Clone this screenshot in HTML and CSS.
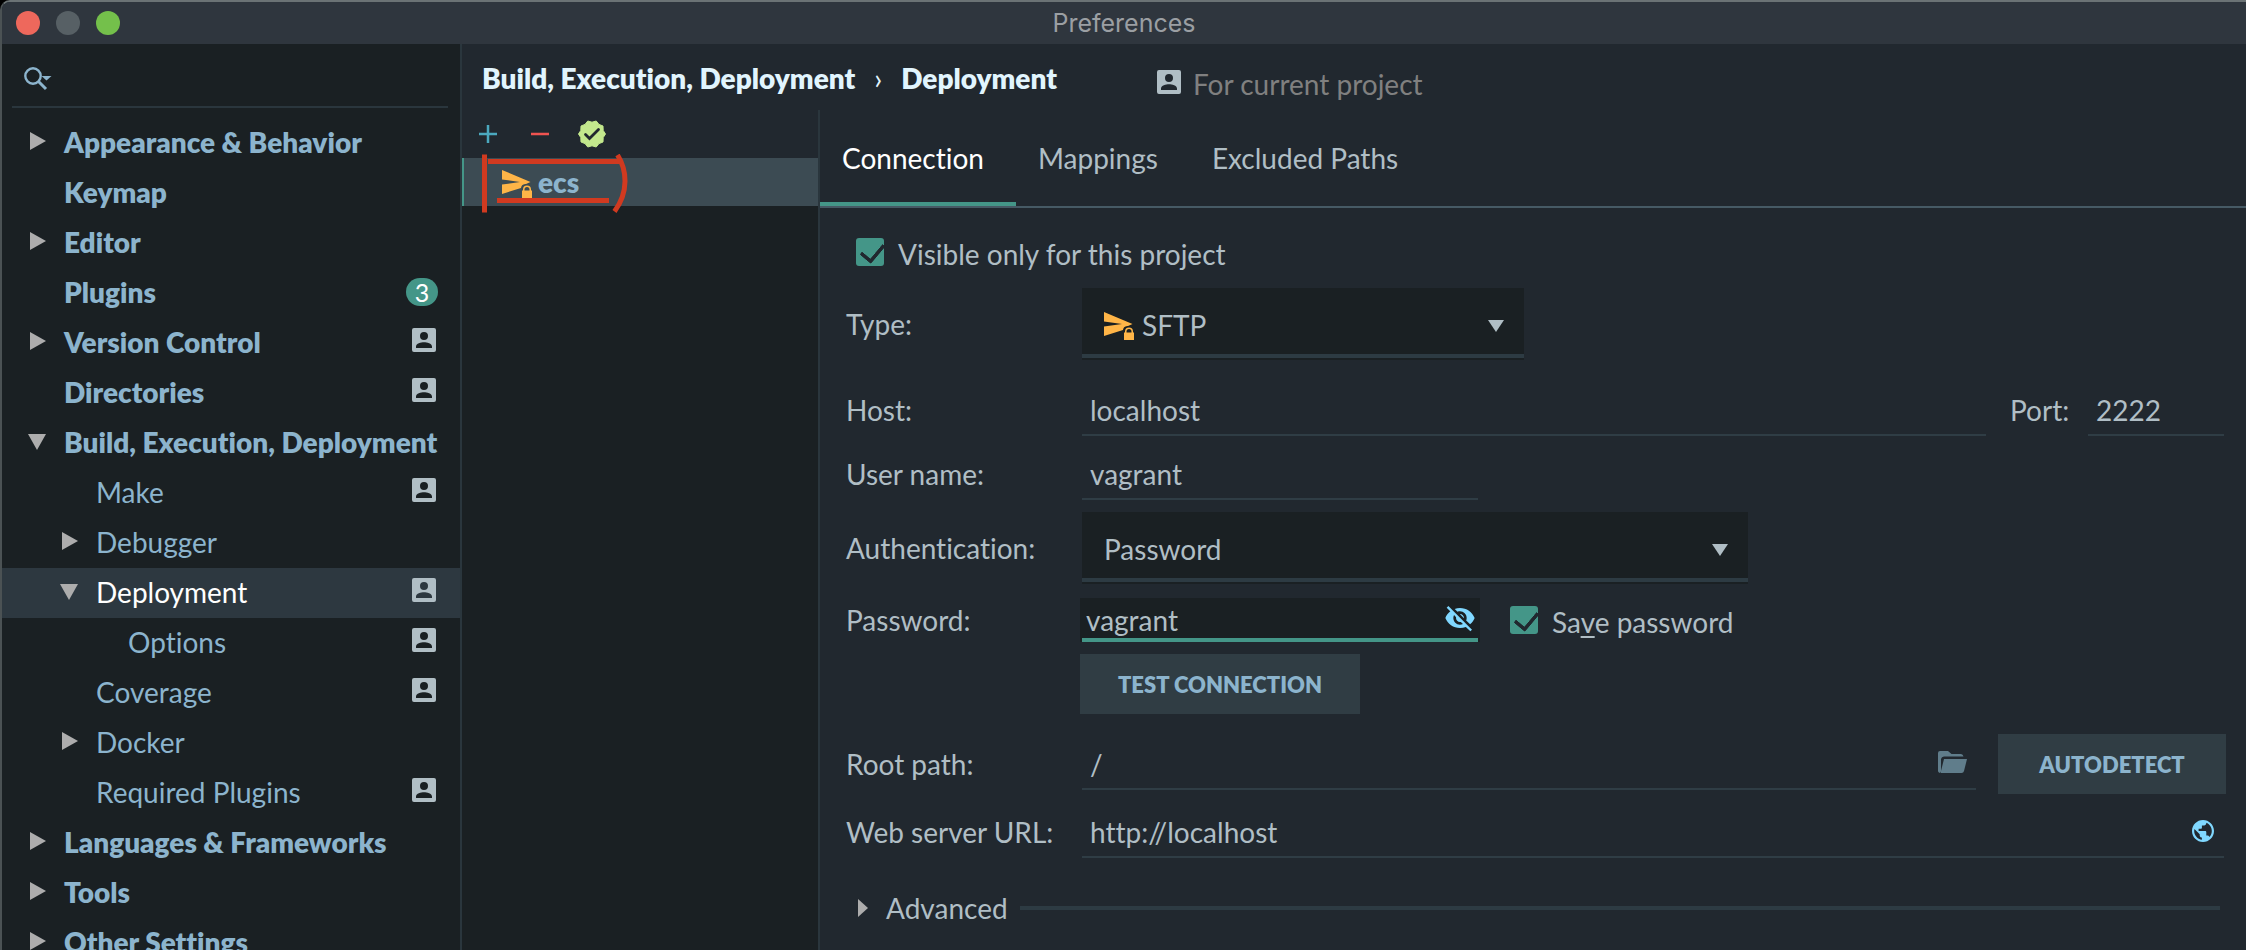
FILE: index.html
```html
<!DOCTYPE html>
<html lang="en">
<head>
<meta charset="utf-8">
<title>Preferences</title>
<link rel="stylesheet" href="styles.css">
</head>
<body>
<svg class="sprite" aria-hidden="true">
  <symbol id="project" viewBox="0 0 24 24"><path fill="currentColor" fill-rule="evenodd" d="M2 0h20a2 2 0 0 1 2 2v20a2 2 0 0 1-2 2H2a2 2 0 0 1-2-2V2a2 2 0 0 1 2-2zM12 4a4 4 0 1 0 0 8a4 4 0 1 0 0-8zM4 20h16v-1.500c0-3-5-4.300-8-4.300s-8 1.300-8 4.300z"/></symbol>
  <symbol id="closed" viewBox="0 0 18 18"><path fill="currentColor" d="M2 0L18 9L2 18z"/></symbol>
  <symbol id="open" viewBox="0 0 18 18"><path fill="currentColor" d="M0 2H18L9 18z"/></symbol>
  <symbol id="sftp" viewBox="0 0 30 28"><path fill="currentColor" d="M0 0L28.500 12L24 14C21 13.500 19 16 19 18L0 24V14.500L18 12L0 9.500z"/><path fill="currentColor" fill-rule="evenodd" d="M20 20.500H21V19.500a4 4 0 0 1 8 0V20.500H30V28H20zM22.500 20.500H27.500V19.500a2.500 2.500 0 0 0-5 0z"/></symbol>
  <symbol id="down" viewBox="0 0 16 12"><path fill="currentColor" d="M0 0H16L8 12z"/></symbol>
</svg>

<div class="window">
  <header class="titlebar">
    <div class="lights">
      <button class="light light-close" aria-label="Close"></button>
      <button class="light light-min" aria-label="Minimize"></button>
      <button class="light light-zoom" aria-label="Zoom"></button>
    </div>
    <h1 class="title">Preferences</h1>
  </header>

  <div class="body">
    <aside class="sidebar">
      <div class="search">
        <svg class="search-icon" viewBox="0 0 28 24" aria-hidden="true"><circle cx="9" cy="9" r="7.700" fill="none" stroke="currentColor" stroke-width="2.400"/><path d="M14.500 14.500L22 22" fill="none" stroke="currentColor" stroke-width="3"/><path d="M17.500 9H27.500L22.500 13.500z" fill="currentColor"/></svg>
        <input class="search-input" type="text" aria-label="Search settings">
      </div>
      <nav class="tree" aria-label="Settings">
        <a class="node top" href="#"><svg class="arrow"><use href="#closed"/></svg><span class="name">Appearance &amp; Behavior</span></a>
        <a class="node top" href="#"><span class="arrow"></span><span class="name">Keymap</span></a>
        <a class="node top" href="#"><svg class="arrow"><use href="#closed"/></svg><span class="name">Editor</span></a>
        <a class="node top" href="#"><span class="arrow"></span><span class="name">Plugins</span><span class="count">3</span></a>
        <a class="node top" href="#"><svg class="arrow"><use href="#closed"/></svg><span class="name">Version Control</span><svg class="scope"><use href="#project"/></svg></a>
        <a class="node top" href="#"><span class="arrow"></span><span class="name">Directories</span><svg class="scope"><use href="#project"/></svg></a>
        <a class="node top" href="#"><svg class="arrow"><use href="#open"/></svg><span class="name">Build, Execution, Deployment</span></a>
        <a class="node child" href="#"><span class="arrow"></span><span class="name">Make</span><svg class="scope"><use href="#project"/></svg></a>
        <a class="node child" href="#"><svg class="arrow"><use href="#closed"/></svg><span class="name">Debugger</span></a>
        <a class="node child selected" href="#" aria-current="page"><svg class="arrow"><use href="#open"/></svg><span class="name">Deployment</span><svg class="scope"><use href="#project"/></svg></a>
        <a class="node grandchild" href="#"><span class="arrow"></span><span class="name">Options</span><svg class="scope"><use href="#project"/></svg></a>
        <a class="node child" href="#"><span class="arrow"></span><span class="name">Coverage</span><svg class="scope"><use href="#project"/></svg></a>
        <a class="node child" href="#"><svg class="arrow"><use href="#closed"/></svg><span class="name">Docker</span></a>
        <a class="node child" href="#"><span class="arrow"></span><span class="name">Required Plugins</span><svg class="scope"><use href="#project"/></svg></a>
        <a class="node top" href="#"><svg class="arrow"><use href="#closed"/></svg><span class="name">Languages &amp; Frameworks</span></a>
        <a class="node top" href="#"><svg class="arrow"><use href="#closed"/></svg><span class="name">Tools</span></a>
        <a class="node top" href="#"><svg class="arrow"><use href="#closed"/></svg><span class="name">Other Settings</span></a>
      </nav>
    </aside>

    <main class="main">
      <div class="crumbs">
        <span class="crumb">Build, Execution, Deployment</span>
        <span class="crumb-sep">›</span>
        <span class="crumb">Deployment</span>
        <span class="for-project"><svg class="for-icon"><use href="#project"/></svg><span>For current project</span></span>
      </div>

      <div class="columns">
        <section class="servers" aria-label="Servers">
          <div class="toolbar">
            <button class="tool" aria-label="Add"><svg viewBox="0 0 28 28"><path d="M5 14H23M14 5V23" stroke="#4ba9bf" stroke-width="2.500"/></svg></button>
            <button class="tool" aria-label="Remove"><svg viewBox="0 0 28 28"><path d="M5 14H23" stroke="#ef5350" stroke-width="2.500"/></svg></button>
            <button class="tool tool-default" aria-label="Use as default"><svg viewBox="-14 -14 28 28"><path fill="#c3e88d" stroke="#c3e88d" stroke-linejoin="round" d="M13.500 0L11.200 3.600L11 8L7 9.600L4.200 13L0 11.800L-4.200 13L-7 9.600L-11 8L-11.200 3.600L-13.500 0L-11.200-3.600L-11-8L-7-9.600L-4.200-13L0-11.800L4.200-13L7-9.600L11-8L11.200-3.600z"/><path d="M-6.500 .5L-2.500 4.500L6.500-4.500" fill="none" stroke="#21282f" stroke-width="2.800" stroke-linecap="round"/></svg></button>
          </div>
          <div class="server">
            <svg class="sftp-icon"><use href="#sftp"/></svg>
            <span class="server-name">ecs</span>
            <svg class="mark" viewBox="0 0 150 60" aria-hidden="true"><path d="M4.500 0.500V58.500M8 7.500H142M17 46.500H129M137.500 1C147 16 149 38 134.500 57.500" fill="none" stroke="#d13a20" stroke-width="5"/></svg>
          </div>
        </section>

        <section class="detail">
          <div class="tabs" role="tablist">
            <button class="tab active" role="tab" aria-selected="true">Connection</button>
            <button class="tab" role="tab" aria-selected="false">Mappings</button>
            <button class="tab" role="tab" aria-selected="false">Excluded Paths</button>
          </div>

          <form class="form">
            <label class="check check-visible"><input type="checkbox" checked><span>Visible only for this project</span></label>

            <div class="row row-type">
              <label class="label" for="type">Type:</label>
              <div class="combo combo-type">
                <svg class="sftp-icon"><use href="#sftp"/></svg>
                <select id="type"><option>SFTP</option></select>
                <svg class="combo-arrow"><use href="#down"/></svg>
              </div>
            </div>

            <div class="row row-host">
              <label class="label" for="host">Host:</label>
              <input class="field grow" id="host" type="text" value="localhost">
              <label class="port-label" for="port">Port:</label>
              <input class="field port" id="port" type="text" value="2222">
            </div>

            <div class="row row-user">
              <label class="label" for="user">User name:</label>
              <input class="field user" id="user" type="text" value="vagrant">
            </div>

            <div class="row row-auth">
              <label class="label" for="auth">Authentication:</label>
              <div class="combo combo-auth">
                <select id="auth"><option>Password</option></select>
                <svg class="combo-arrow"><use href="#down"/></svg>
              </div>
            </div>

            <div class="row row-pass">
              <label class="label" for="pass">Password:</label>
              <div class="secret">
                <input class="secret-input" id="pass" type="text" value="vagrant">
                <button class="eye" type="button" aria-label="Hide password"><svg viewBox="0 0 24 24"><path fill="currentColor" d="M12 7c2.760 0 5 2.240 5 5 0 .65-.13 1.260-.36 1.830l2.920 2.920c1.510-1.260 2.700-2.890 3.430-4.750-1.730-4.390-6-7.500-11-7.500-1.400 0-2.740.25-3.980.7l2.160 2.160C10.740 7.130 11.350 7 12 7zM2 4.270l2.280 2.280.46.46C3.080 8.300 1.780 10.020 1 12c1.730 4.390 6 7.500 11 7.500 1.550 0 3.030-.3 4.380-.84l.42.42L19.730 22 21 20.730 3.270 3 2 4.270zM7.530 9.800l1.550 1.550c-.05.21-.08.43-.08.65 0 1.660 1.340 3 3 3 .22 0 .44-.03.65-.08l1.550 1.550c-.67.33-1.410.53-2.200.53-2.760 0-5-2.240-5-5 0-.79.2-1.530.53-2.200zm4.310-.78l3.150 3.150.02-.16c0-1.660-1.340-3-3-3l-.17.01z"/></svg></button>
              </div>
              <label class="check check-save"><input type="checkbox" checked><span>Sa<u>v</u>e password</span></label>
            </div>

            <div class="row row-test">
              <button class="btn btn-test" type="button">TEST CONNECTION</button>
            </div>

            <div class="row row-root">
              <label class="label" for="root">Root path:</label>
              <div class="with-icon grow">
                <input class="field" id="root" type="text" value="/">
                <button class="folder" type="button" aria-label="Browse"><svg viewBox="0 0 29 22"><path fill="currentColor" d="M2 0H10L13.500 3H23Q25 3 25.500 5.500H6Q3.500 5.500 3 8V20.500L1.500 22Q0 21 0 20V2Q0 0 2 0z"/><path fill="currentColor" d="M6 8H29L26 20Q25.500 22 23.500 22H2.500z"/></svg></button>
              </div>
              <button class="btn btn-auto" type="button">AUTODETECT</button>
            </div>

            <div class="row row-web">
              <label class="label" for="web">Web server URL:</label>
              <div class="with-icon grow">
                <input class="field" id="web" type="text" value="http://localhost">
                <button class="globe" type="button" aria-label="Open in browser"><svg viewBox="2 2 20 20"><path fill="currentColor" d="M12 2C6.480 2 2 6.480 2 12s4.480 10 10 10 10-4.480 10-10S17.520 2 12 2zm-1 17.930c-3.950-.49-7-3.850-7-7.930 0-.62.08-1.210.21-1.790L9 15v1c0 1.100.9 2 2 2v1.930zm6.900-2.540c-.26-.81-1-1.390-1.900-1.390h-1v-3c0-.55-.45-1-1-1H8v-2h2c.55 0 1-.45 1-1V7h2c1.100 0 2-.9 2-2v-.41c2.930 1.190 5 4.060 5 7.410 0 2.080-.8 3.970-2.100 5.390z"/></svg></button>
              </div>
            </div>

            <button class="advanced" type="button" aria-expanded="false">
              <svg class="adv-arrow" viewBox="0 0 10 18"><path fill="currentColor" d="M0 0L10 9L0 18z"/></svg>
              <span>Advanced</span>
              <span class="rule"></span>
            </button>
          </form>
        </section>
      </div>
    </main>
  </div>
</div>
</body>
</html>
```
FILE: styles.css
```css
* { box-sizing: border-box; }

body {
  margin: 0;
  background: #000;
  color: #b0bec5;
  font-family: Lato, "Open Sans", sans-serif;
  font-size: 28px;
  line-height: 32px;
  font-variant-ligatures: none;
}

button, input, select {
  margin: 0;
  padding: 0;
  border: 0;
  border-radius: 0;
  background: none;
  color: inherit;
  font: inherit;
  font-variant-ligatures: none;
  outline: 0;
}

svg { display: block; flex: none; }
.sprite { position: absolute; width: 0; height: 0; }

.window {
  display: flex;
  flex-direction: column;
  height: 100vh;
  border-top: 2px solid #6b7375;
  border-left: 2px solid #4b5254;
  border-radius: 10px 0 0 0;
  background: #21282f;
  overflow: hidden;
}

/* Title bar */
.titlebar {
  display: grid;
  grid-template-columns: 1fr auto 1fr;
  align-items: center;
  height: 42px;
  flex: none;
  background: #2f363e;
}
.lights { display: flex; gap: 16px; padding-left: 14px; }
.light { width: 24px; height: 24px; border-radius: 50%; }
.light-close { background: #ee685c; }
.light-min { background: #576065; }
.light-zoom { background: #74c04b; }
.title {
  margin: 0;
  font-family: Inter, sans-serif;
  font-size: 25px;
  font-weight: 400;
  line-height: 32px;
  color: #9b9fa3;
}

.body { display: flex; flex: 1; min-height: 0; }

/* Sidebar */
.sidebar {
  width: 460px;
  flex: none;
  border-right: 2px solid #2a363d;
  background: #1a2023;
  overflow: hidden;
}
.search {
  display: flex;
  align-items: center;
  height: 64px;
  margin: 0 12px 10px 10px;
  padding: 8px 0 0 12px;
  border-bottom: 2px solid #2a363d;
  color: #8cb4cd;
}
.search-icon { width: 28px; height: 24px; }
.search-input { flex: 1; min-width: 0; padding-left: 8px; }

.node {
  display: flex;
  align-items: flex-start;
  height: 50px;
  padding-right: 24px;
  color: #8cb4cd;
  text-decoration: none;
}
.top { padding-left: 26px; font-weight: 800; }
.child { padding-left: 58px; }
.grandchild { padding-left: 90px; }
.arrow { width: 18px; height: 18px; margin-top: 14px; color: #adadad; flex: none; }
.name { flex: 1; min-width: 0; margin-top: 8px; padding-left: 18px; white-space: nowrap; }
.scope { width: 24px; height: 24px; margin-top: 10px; color: #b0bec5; }
.count {
  width: 32px;
  height: 28px;
  margin: 10px -2px 0 0;
  border-radius: 14px;
  background: #449688;
  color: #fff;
  font-size: 25px;
  font-weight: 400;
  line-height: 28px;
  text-align: center;
}
.selected { background: #2d3840; color: #fff; }

/* Main */
.main { display: flex; flex-direction: column; flex: 1; min-width: 0; }
.crumbs {
  display: flex;
  height: 66px;
  flex: none;
  padding: 18px 0 0 20px;
  color: #e1f5fe;
}
.crumb { font-weight: 800; }
.crumb-sep { padding: 0 19px; }
.for-project { display: flex; margin: 6px 0 0 100px; color: #808080; }
.for-icon { width: 24px; height: 24px; margin: 2px 12px 0 0; color: #b0bec5; }

.columns { display: flex; flex: 1; min-height: 0; }
.servers {
  width: 358px;
  flex: none;
  border-right: 2px solid #2a363d;
  background: #1a2023;
}
.toolbar {
  display: flex;
  gap: 24px;
  height: 48px;
  padding: 10px 0 0 12px;
  background: #21282f;
}
.tool, .tool svg { width: 28px; height: 28px; }
.server {
  position: relative;
  display: flex;
  align-items: flex-start;
  height: 48px;
  padding: 8px 0 0 38px;
  border-left: 2px solid #449688;
  background: #3c4b53;
  color: #8cb4cd;
  font-weight: 800;
}
.sftp-icon { width: 30px; height: 28px; color: #ffb547; }
.server .sftp-icon { margin-top: 4px; }
.server-name { padding-left: 6px; }
.mark { position: absolute; left: 16px; top: -4px; width: 150px; height: 60px; }

.detail { flex: 1; min-width: 0; }
.tabs { display: flex; height: 98px; border-bottom: 2px solid #465a65; }
.tab { padding: 4px 32px 0 22px; border-bottom: 4px solid transparent; }
.active { border-bottom-color: #449688; color: #fff; }

/* Form */
.form { padding: 30px 20px 0 26px; }
.check { display: flex; align-items: flex-start; height: 32px; }
.check input {
  appearance: none;
  position: relative;
  width: 28px;
  height: 28px;
  flex: none;
  border-radius: 3px;
  background: #449688;
}
.check input:checked::after {
  content: "";
  position: absolute;
  left: 5px;
  top: 5px;
  width: 19px;
  height: 11px;
  border-left: 4px solid #21282f;
  border-bottom: 4px solid #21282f;
  border-radius: 2px;
  transform: rotate(-50deg);
}
.check-visible { padding-left: 10px; }
.check-visible span { padding-left: 14px; }
.check-save { margin: 8px 0 0 30px; }
.check-save span { padding-left: 14px; }
.check-save u { text-underline-offset: 3px; text-decoration-thickness: 2px; text-decoration-skip-ink: none; }

.row { display: flex; align-items: flex-start; }
.label { width: 236px; flex: none; white-space: nowrap; }
.grow { flex: 1; min-width: 0; }

.field {
  height: 42px;
  padding: 0 8px 8px;
  border-bottom: 2px solid #2f3d45;
}
.user { width: 396px; }
.port { width: 136px; }
.port-label { width: 78px; margin-left: 24px; }

.combo { position: relative; height: 72px; padding-bottom: 2px; background: #1a2023; }
.combo select {
  appearance: none;
  display: block;
  width: 100%;
  height: 70px;
  padding: 8px 60px 0 22px;
  border-bottom: 4px solid #2d3b43;
}
.combo .sftp-icon { position: absolute; left: 22px; top: 24px; pointer-events: none; }
.combo-arrow { position: absolute; right: 20px; top: 32px; width: 16px; height: 12px; pointer-events: none; }
.combo-type { width: 442px; }
.combo-type select { padding-left: 60px; }
.combo-auth { width: 666px; }

.row-type { margin-top: 18px; }
.row-type, .row-auth { align-items: center; }
.row-host { margin-top: 34px; padding-right: 2px; }
.row-user { margin-top: 22px; }
.row-auth { margin-top: 12px; }
.row-pass { margin-top: 14px; }
.row-pass .label { padding-top: 6px; width: 234px; }
.row-test { margin-top: 12px; padding-left: 234px; }
.row-root { margin-top: 20px; align-items: center; }
.row-web { margin-top: 22px; padding-right: 2px; }

.secret {
  display: flex;
  width: 400px;
  height: 44px;
  padding-bottom: 4px;
  background: linear-gradient(#449688, #449688) center bottom / calc(100% - 4px) 4px no-repeat, #1a2023;
}
.secret-input { flex: 1; min-width: 0; padding: 6px 0 2px 6px; }
.eye { width: 32px; height: 32px; margin: 4px 4px 0 0; color: #80d8ff; }

.btn {
  height: 60px;
  padding-top: 2px;
  background: #303d44;
  color: #8cb4cd;
  font-weight: 800;
  font-size: 22px;
}
.btn-test { width: 280px; }
.btn-auto { width: 228px; margin-left: 22px; }

.with-icon { position: relative; }
.with-icon .field { display: block; width: 100%; padding-right: 50px; }
.row-root .with-icon { padding: 14px 0 4px; }
.folder { position: absolute; right: 9px; top: 17px; color: #607d8b; }
.folder svg { width: 29px; height: 22px; }
.globe { position: absolute; right: 10px; top: 4px; color: #80d8ff; }
.globe svg { width: 22px; height: 22px; }

.advanced {
  display: flex;
  align-items: center;
  width: 100%;
  margin-top: 34px;
  padding: 0 6px 0 12px;
}
.adv-arrow { width: 10px; height: 18px; margin-right: 18px; color: #adadad; }
.rule { flex: 1; height: 4px; margin-left: 12px; background: #2d3b43; }
```
